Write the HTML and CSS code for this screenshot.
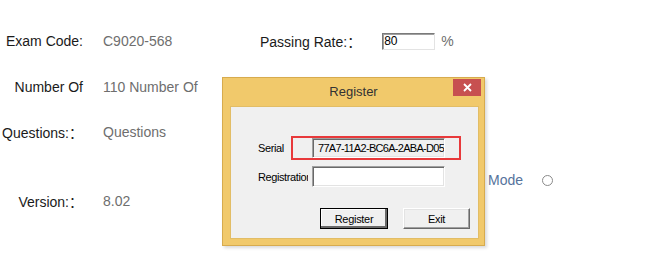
FILE: index.html
```html
<!doctype html>
<html>
<head>
    <meta charset="utf-8" />
    <title>Exam Info</title>
    <link rel="stylesheet" href="styles.css">
</head>
<body>
<div class="page">
    <div class="fields">
        <div class="row row-code">
            <span class="label">Exam Code:</span>
            <span class="value code">C9020-568</span>
            <span class="label rate-label">Passing Rate:：</span>
            <input class="rate" type="text" value="80" />
            <span class="value pct">%</span>
        </div>
        <div class="row row-num">
            <span class="label">Number Of</span>
            <span class="value">110 Number Of</span>
        </div>
        <div class="row row-q">
            <span class="label">Questions:：</span>
            <span class="value">Questions</span>
        </div>
        <div class="row row-ver">
            <span class="label">Version:：</span>
            <span class="value">8.02</span>
        </div>
    </div>
    <div class="side">
        <span class="mode">Mode</span>
        <span class="radio"></span>
    </div>
</div>

<div class="dialog">
    <div class="titlebar">
        <span class="title">Register</span>
        <span class="close">
            <svg width="9" height="9" viewBox="0 0 9 9">
                <path d="M1 1L8 8M8 1L1 8" stroke="#fff" stroke-width="1.8" />
            </svg>
        </span>
    </div>
    <div class="client">
        <div class="drow serial-row">
            <span class="dlabel">Serial</span>
            <input class="tbox readonly" type="text" value="77A7-11A2-BC6A-2ABA-D05E" readonly />
            <span class="mark"></span>
        </div>
        <div class="drow reg-row">
            <span class="dlabel">Registration</span>
            <input class="tbox reg" type="text" value="" />
        </div>
        <div class="btns">
            <button class="btn default">Register</button>
            <button class="btn">Exit</button>
        </div>
    </div>
</div>
</body>
</html>
```

FILE: styles.css
```css
*{
    margin:0px;
    padding:0px;
    box-sizing:border-box;
}
html,body{
    width:100%;
    height:100%;
    background-color:#fff;
    font-family:"Liberation Sans","Noto Sans CJK SC",sans-serif;
    font-size:14px;
    color:#1a1a1a;
    overflow:hidden;
}
.page{
    display:flex;
}
.fields{
    width:488px;
    padding-top:26px;
}
.row{
    display:flex;
    align-items:center;
    height:30px;
    white-space:nowrap;
}
.row-num{
    margin-top:16px;
}
.row-q{
    margin-top:15px;
}
.row-ver{
    margin-top:39px;
}
.label{
    width:83px;
    flex:none;
    text-align:right;
}
.value{
    margin-left:20px;
    color:#6e6e6e;
}
.code{
    width:137px;
}
.rate-label{
    width:auto;
    margin-left:20px;
    text-align:left;
}
.rate{
    margin-left:21px;
    width:53px;
    height:17px;
    font-family:"Liberation Sans",sans-serif;
    font-size:12px;
    padding-left:1px;
    border:1px solid;
    border-color:#7a7a7a #e3e3e3 #e3e3e3 #7a7a7a;
    box-shadow:inset 1px 1px 0 #a0a0a0;
    outline:none;
}
.pct{
    margin-left:6px;
}
.side{
    padding-top:172px;
    display:flex;
    align-items:center;
    height:188px;
}
.mode{
    color:#56739c;
    line-height:16px;
}
.radio{
    margin-left:19px;
    width:11px;
    height:11px;
    border:1px solid #8a8a8a;
    border-radius:50%;
}

/* register window */
.dialog{
    position:absolute;
    left:222px;
    top:77px;
    width:263px;
    height:169px;
    display:flex;
    flex-direction:column;
    background-color:#f1c96b;
    border:1px solid #d7ab4e;
    padding:0px 5px 6px 7px;
    box-shadow:2px 2px 3px rgba(0,0,0,.15);
}
.titlebar{
    display:grid;
    grid-template-columns:1fr auto 1fr;
    height:28px;
    margin:0px -5px 0px -7px;
}
.title{
    grid-column:2;
    font-size:13px;
    color:#333;
    line-height:28px;
}
.close{
    grid-column:3;
    justify-self:end;
    width:28px;
    height:17px;
    margin:1px 3px 0px 0px;
    background-color:#c75050;
    display:flex;
    align-items:center;
    justify-content:center;
}
.close svg{
    display:block;
}
.client{
    flex:1;
    background-color:#f0f0f0;
    border:1px solid #e2bd66;
    padding:31px 0px 0px 27px;
    font-size:11px;
    letter-spacing:-0.4px;
    color:#000;
}
.drow{
    position:relative;
    display:flex;
    align-items:center;
}
.dlabel{
    width:50px;
    margin-right:4px;
    flex:none;
    overflow:hidden;
    white-space:nowrap;
}
.tbox{
    width:133px;
    height:20px;
    font-family:"Liberation Sans",sans-serif;
    font-size:11px;
    letter-spacing:-0.7px;
    padding-left:5px;
    border:1px solid;
    border-color:#a0a0a0 #fff #fff #a0a0a0;
    box-shadow:inset 1px 1px 0 #696969,inset -1px -1px 0 #e3e3e3;
    background-color:#fff;
    outline:none;
}
.readonly{
    background-color:#f0f0f0;
}
.reg{
    height:21px;
}
.reg-row{
    margin-top:8px;
}
.mark{
    position:absolute;
    left:33px;
    top:-2px;
    width:170px;
    height:24px;
    border:2px solid #e8393b;
    z-index:2;
}
.btns{
    display:flex;
    gap:15px;
    margin-top:21px;
    padding-left:62px;
}
.btn{
    width:67px;
    height:21px;
    font-family:"Liberation Sans",sans-serif;
    font-size:11px;
    letter-spacing:-0.3px;
    color:#000;
    background-color:#f0f0f0;
    border:1px solid;
    border-color:#fff #696969 #696969 #fff;
    box-shadow:inset -1px -1px 0 #a0a0a0,inset 1px 1px 0 #e3e3e3;
}
.btn.default{
    width:68px;
    border-color:#000;
    box-shadow:inset -2px -2px 0 #696969,inset 1px 1px 0 #fff,inset -1px -1px 0 #a0a0a0;
}
```
